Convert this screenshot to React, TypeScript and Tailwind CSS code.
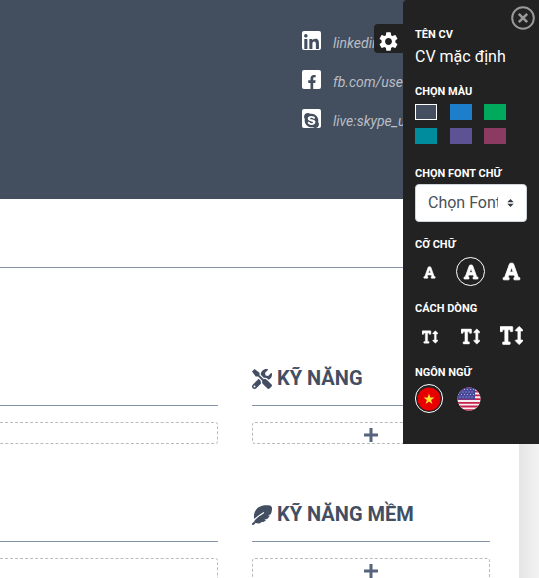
import React from 'react';
import { FaLinkedinIn, FaFacebookF, FaSkype, FaFont, FaTextHeight, FaTools } from 'react-icons/fa';
import { MdSettings } from 'react-icons/md';

const socials = [
  { icon: <FaLinkedinIn size={17} className="-mb-px shrink-0" />, text: 'linkedin' },
  { icon: <FaFacebookF size={14} className="shrink-0" />, text: 'fb.com/use' },
  { icon: <FaSkype size={17} className="-mb-px shrink-0" />, text: 'live:skype_u' },
];

const colors = [
  { name: 'Xám', cls: 'bg-[#434e5e] border border-white' },
  { name: 'Xanh dương', cls: 'bg-[#1d7fcc]' },
  { name: 'Xanh lá', cls: 'bg-[#00a95c]' },
  { name: 'Xanh ngọc', cls: 'bg-[#008c9c]' },
  { name: 'Tím', cls: 'bg-[#5d5294]' },
  { name: 'Đỏ', cls: 'bg-[#8b3a62]' },
];

function Quill() {
  return (
    <svg width="20" height="20" viewBox="0 0 20 20" className="shrink-0">
      <path
        fill="#434e62"
        d="M2.200 14.500C1.200 9.500 2.800 5 6.500 2.300 10 0 14.500-.3 18 .6c1.600.6 2.200 2 2 3.800-.1 1.900-.6 3.500-1.500 5l-2.700.9 2 .4c-.7 1.300-1.600 2.300-2.700 3.200l-3 .5 2 .6c-.9.9-1.800 1.500-2.800 1.900l-3.300.1 1.700.8c-1.900.8-4.100.8-6 .2z"
      />
      <path stroke="#ffffff" strokeWidth="1.300" fill="none" d="M2 15Q6 11 12 7.500" />
      <path stroke="#434e62" strokeWidth="2" fill="none" strokeLinecap="round" d="M1 19Q4 15.800 8.500 12" />
    </svg>
  );
}

function AddBox() {
  return (
    <button
      type="button"
      aria-label="Thêm"
      className="flex h-[22px] w-full items-center justify-center rounded-[3px] border border-dashed border-[#bbbbbb] text-[#56647e]"
    >
      <svg width="14" height="14" viewBox="0 0 14 14" fill="currentColor" className="mt-1 shrink-0">
        <path d="M5.500 0h3v5.500H14v3H8.500V14h-3V8.500H0v-3h5.500z" />
      </svg>
    </button>
  );
}

function Skill({ icon, title }: { icon: React.ReactNode; title: string }) {
  return (
    <section>
      <h2 className="flex h-[54px] items-center gap-[5px] border-b border-[#8494a8] text-xl font-bold text-[#434e62]">
        {icon}
        <span className="pb-px">{title}</span>
      </h2>
      <div className="pt-4">
        <AddBox />
      </div>
    </section>
  );
}

function LeftBlock() {
  return (
    <section>
      <div className="h-[54px] border-b border-[#8494a8]" />
      <div className="pt-4">
        <div className="h-[22px] rounded-r-[3px] border border-l-0 border-dashed border-[#bbbbbb]" />
      </div>
    </section>
  );
}

function Label({ children }: { children: React.ReactNode }) {
  return <h3 className="text-[11px] leading-4 font-bold">{children}</h3>;
}

function Settings() {
  return (
    <aside className="absolute top-0 right-0 h-[444px] w-[136px] rounded-tl-[4px] bg-[#222222] px-3 pt-[27px] text-white">
      <button
        type="button"
        aria-label="Cài đặt"
        className="absolute top-6 -left-[29px] flex h-[29px] w-[29px] items-center justify-center rounded-l-[4px] bg-[#222222] pt-1.5"
      >
        <MdSettings size={23} className="shrink-0" />
      </button>
      <button type="button" aria-label="Đóng" className="absolute top-1.5 right-1 text-[#999999]">
        <svg width="24" height="24" viewBox="0 0 24 24" fill="none" stroke="currentColor">
          <circle cx="12" cy="12" r="10.800" strokeWidth="2" />
          <path d="M7.800 7.800l8.400 8.400M16.200 7.800l-8.400 8.400" strokeWidth="2.600" />
        </svg>
      </button>

      <Label>TÊN CV</Label>
      <p className="h-[41px] pt-0.5 text-base whitespace-nowrap">CV mặc định</p>

      <Label>CHỌN MÀU</Label>
      <div className="grid h-[66px] w-[104px] grid-cols-3 content-start gap-y-2 pt-1">
        {colors.map((c) => (
          <button key={c.name} type="button" aria-label={c.name} className={`h-4 w-[22px] ${c.cls}`} />
        ))}
      </div>

      <Label>CHỌN FONT CHỮ</Label>
      <div className="relative mt-0.5 mb-[15px]">
        <select
          aria-label="Chọn Font chữ"
          className="h-[38px] w-full appearance-none overflow-hidden rounded-[4px] border border-[#ced4da] bg-white pr-7 pl-3 text-base text-[#495057]"
        >
          <option>Chọn Font chữ</option>
        </select>
        <svg width="7" height="8" viewBox="0 0 4 5" className="pointer-events-none absolute top-[15px] right-[13px]">
          <path fill="#343a40" d="M2 0L0 2h4zm0 5L0 3h4z" />
        </svg>
      </div>

      <Label>CỠ CHỮ</Label>
      <div className="mb-3 flex h-9 items-center">
        <button type="button" aria-label="Nhỏ" className="flex h-[29px] w-[29px] items-center justify-center pt-[3px]">
          <FaFont size={13} className="stroke-current stroke-[24]" />
        </button>
        <button
          type="button"
          aria-label="Vừa"
          className="ml-3 flex h-[29px] w-[29px] items-center justify-center rounded-full border border-white pt-0.5"
        >
          <FaFont size={16} className="shrink-0 stroke-current stroke-[24]" />
        </button>
        <button type="button" aria-label="Lớn" className="ml-3 flex h-[29px] w-[29px] items-center justify-center">
          <FaFont size={19} className="stroke-current stroke-[24]" />
        </button>
      </div>

      <Label>CÁCH DÒNG</Label>
      <div className="mb-3 flex h-9 items-center">
        <button type="button" aria-label="Hẹp" className="flex h-[29px] w-[29px] items-center justify-center pt-[3px]">
          <FaTextHeight size={16} className="stroke-current stroke-[16]" />
        </button>
        <button type="button" aria-label="Trung bình" className="ml-3 flex h-[29px] w-[29px] items-center justify-center pt-0.5">
          <FaTextHeight size={19} className="stroke-current stroke-[16]" />
        </button>
        <button type="button" aria-label="Rộng" className="ml-3 flex h-[29px] w-[29px] items-center justify-center">
          <FaTextHeight size={23} className="stroke-current stroke-[16]" />
        </button>
      </div>

      <Label>NGÔN NGỮ</Label>
      <div className="flex items-center gap-[11px] pt-[3px]">
        <button type="button" aria-label="Tiếng Việt" className="flex h-[29px] w-7 items-center justify-center rounded-full border border-white">
          <svg width="24" height="24" viewBox="0 0 24 24" className="shrink-0">
            <circle cx="12" cy="12" r="11.500" fill="#e80000" />
            <path fill="#ffe62e" d="M12 6.500l1.300 4h4.200l-3.400 2.500 1.300 4L12 14.500 8.600 17l1.300-4-3.400-2.500h4.200z" />
          </svg>
        </button>
        <button type="button" aria-label="English" className="flex h-[29px] w-[29px] items-center justify-center">
          <svg width="24" height="24" viewBox="0 0 24 24">
            <clipPath id="us"><circle cx="12" cy="12" r="11.500" /></clipPath>
            <g clipPath="url(#us)">
              <rect width="24" height="24" fill="#f3eff3" />
              <path stroke="#c9204a" strokeWidth="1.800" d="M0 1h24M0 4.700h24M0 8.400h24M0 12.100h24M0 15.800h24M0 19.500h24M0 23.200h24" />
              <rect width="18" height="12.500" fill="#48489a" />
              <path stroke="#b0b0d8" strokeWidth="1" strokeDasharray="1 2" d="M1 2.500h16M2.500 5h15M1 7.500h16M2.500 10h15" />
            </g>
          </svg>
        </button>
      </div>
    </aside>
  );
}

export default function App() {
  return (
    <div className="relative h-screen overflow-hidden bg-[#f1f1f1] bg-linear-to-r from-[#e4e4e4] from-96% to-[#f3f3f3] pr-5 font-['Roboto','Liberation_Sans',sans-serif]">
      <main className="min-h-screen bg-white">
        <header className="h-[199px] bg-[#434e5e] pt-[31px]">
          <ul className="ml-[302px] space-y-5">
            {socials.map((s) => (
              <li key={s.text} className="flex h-[19px] items-center gap-3">
                <span className="flex h-[19px] w-[19px] shrink-0 items-end justify-center overflow-hidden rounded-[2px] bg-white text-[#434e5e]">
                  {s.icon}
                </span>
                <span className="pt-[5px] text-sm whitespace-nowrap text-[#b9bec5] italic">{s.text}</span>
              </li>
            ))}
          </ul>
        </header>
        <div className="h-[69px] border-b border-[#8494a8]" />
        <div className="flex gap-[34px] pt-[84px] pr-[29px]">
          <div className="flex w-[218px] shrink-0 flex-col gap-11">
            <LeftBlock />
            <LeftBlock />
          </div>
          <div className="flex min-w-0 flex-1 flex-col gap-11">
            <Skill icon={<FaTools size={20} />} title="KỸ NĂNG" />
            <Skill icon={<Quill />} title="KỸ NĂNG MỀM" />
          </div>
        </div>
      </main>
      <Settings />
    </div>
  );
}
